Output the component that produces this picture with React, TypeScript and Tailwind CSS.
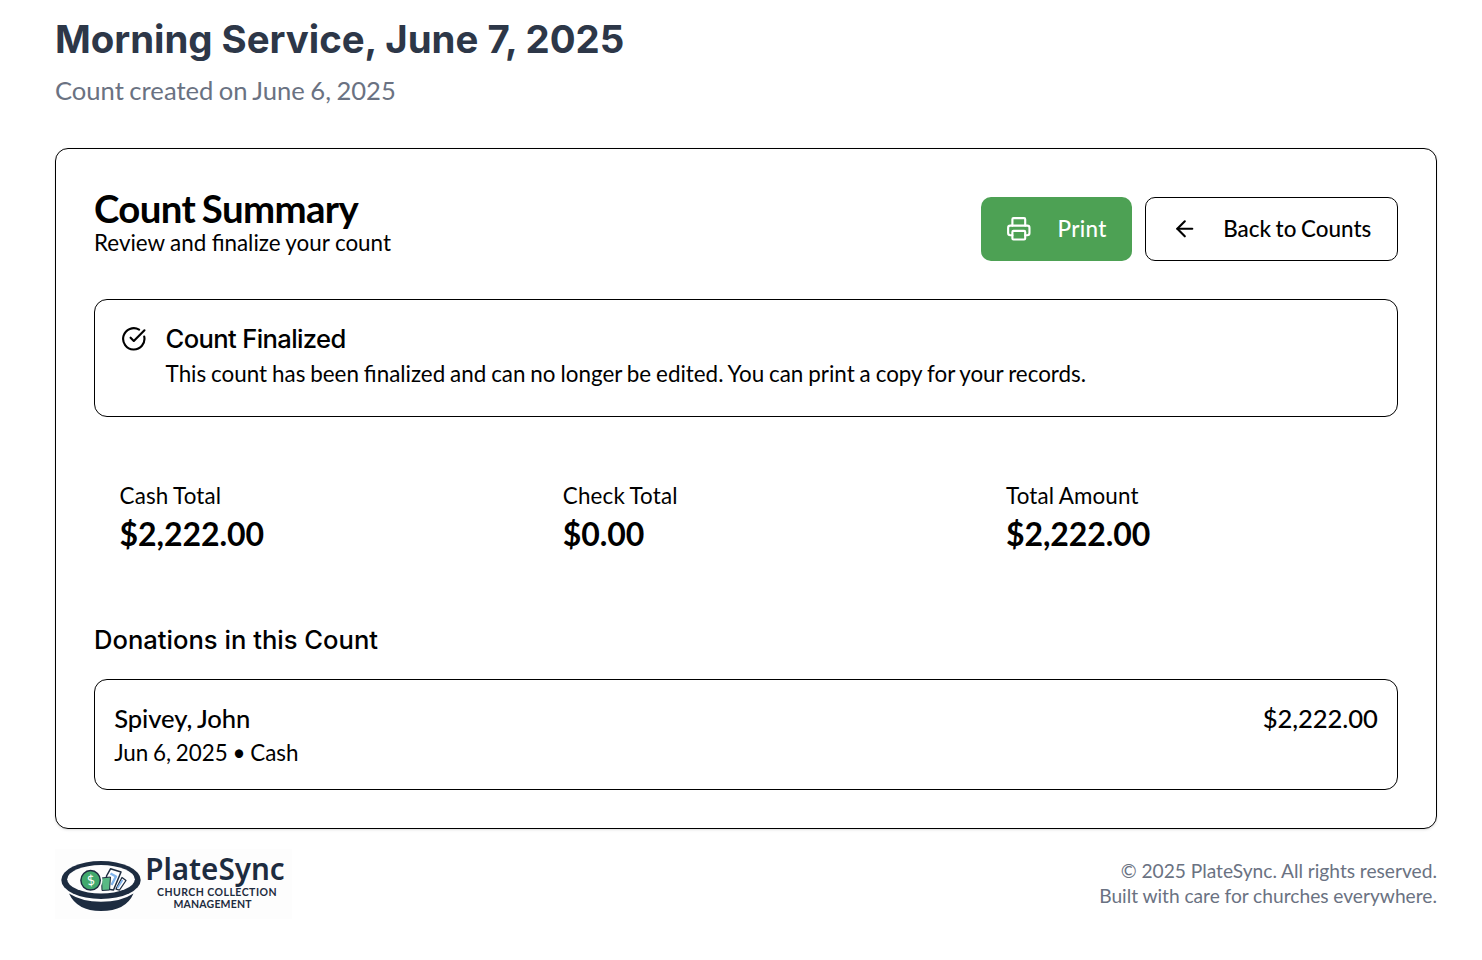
import React from "react";
import { ArrowLeft, Printer, CircleCheckBig } from "lucide-react";

const totals = [
  { label: "Cash Total", value: "$2,222.00" },
  { label: "Check Total", value: "$0.00" },
  { label: "Total Amount", value: "$2,222.00" },
];

function Logo() {
  return (
    <svg width="237" height="70" viewBox="55 849 237 70" role="img" aria-label="PlateSync" className="overflow-visible">
      <rect x="55" y="849" width="237" height="70" fill="#fdfdfd" />
      <path d="M69 893.5 Q77 911 101 911 Q126 911 133.5 893.5 Q121 901.8 101 901.8 Q82 901.8 69 893.5Z" fill="#1d2c40" />
      <ellipse cx="101" cy="880" rx="39.7" ry="19" fill="#1d2c40" />
      <ellipse cx="101" cy="879.3" rx="33.8" ry="14.2" fill="#fdfdfd" />
      <g strokeLinejoin="round">
        <path d="M116 889 L122 877.5 L126 880.5 L119.5 890Z" fill="#fff" stroke="#1d2c40" strokeWidth="1.3" />
        <path d="M117.5 888 L122.5 880" stroke="#82b4eb" strokeWidth="1.8" />
        <path d="M106.5 876 L110.5 868.8 L121 872 L113.5 890 L107 889Z" fill="#fff" stroke="#1d2c40" strokeWidth="1.5" />
        <path d="M110.5 873.5 L116 876.5 L111.5 885" fill="none" stroke="#82b4eb" strokeWidth="2.4" />
        <path d="M101.5 878 L110.5 877 L109.5 890 L102 890.5Z" fill="#58b984" stroke="#1d2c40" strokeWidth="1" />
      </g>
      <circle cx="91" cy="880.3" r="11.4" fill="#fdfdfd" />
      <circle cx="90.6" cy="880.3" r="9.7" fill="#41a96d" stroke="#1d2c40" strokeWidth="1.5" />
      <text x="91" y="885" textAnchor="middle" fill="#fff" fontSize="13" className="font-['Lato',sans-serif]" transform="rotate(-8 91 881)">$</text>
      <text x="145.2" y="879.6" fill="#1d2c40" fontSize="30" fontWeight="650" textLength="139.5" lengthAdjust="spacingAndGlyphs" className="font-['Noto_Sans',sans-serif]">PlateSync</text>
      <text x="157" y="895.8" fill="#1d2c40" fontSize="10.5" fontWeight="700" textLength="119.5" className="font-['Lato',sans-serif]">CHURCH COLLECTION</text>
      <text x="173.5" y="907.8" fill="#1d2c40" fontSize="10.5" fontWeight="700" textLength="78" className="font-['Lato',sans-serif]">MANAGEMENT</text>
    </svg>
  );
}

export default function App() {
  return (
    <div className="flex h-[960px] w-[1482px] flex-col bg-white pl-[55px] pr-[45px] pt-[14px] font-['Lato',sans-serif] text-black">
      <header className="h-[134px]">
        <h1 className="font-['Inter',sans-serif] text-[38.4px] font-bold leading-[51px] tracking-[-0.02px] text-[#2d3748]">Morning Service, June 7, 2025</h1>
        <p className="mt-1.5 text-[25.6px] leading-[38.4px] text-gray-500 [word-spacing:-1.1px]">Count created on June 6, 2025</p>
      </header>

      <main className="h-[681px] rounded-[13px] border border-black px-[38px] pt-[38px] shadow-sm">
        <div className="flex h-[112px] items-start justify-between">
          <div className="pt-0.5">
            <h2 className="text-[38.4px] font-bold leading-[38px] tracking-[-0.64px] [word-spacing:-2px]">Count Summary</h2>
            <p className="text-[22.4px] leading-8 [word-spacing:-0.3px]">Review and finalize your count</p>
          </div>
          <div className="mt-2.5 flex gap-[13px]">
            <button className="flex h-16 w-[151px] items-center rounded-[10px] bg-[#4da154] pl-[25px] text-[22.4px] font-medium tracking-[0.3px] text-white">
              <Printer size={25.6} strokeWidth={2} className="shrink-0" />
              <span className="ml-[26px]">Print</span>
            </button>
            <button className="flex h-16 w-[253px] items-center rounded-[10px] border border-black pl-[25.6px] text-[22.4px] font-medium [word-spacing:-1px]">
              <ArrowLeft size={25.6} strokeWidth={2} className="shrink-0" />
              <span className="ml-[26px] whitespace-nowrap">Back to Counts</span>
            </button>
          </div>
        </div>

        <section className="flex h-[118px] gap-[19px] rounded-[13px] border border-black pl-[26px] pt-[26px]">
          <CircleCheckBig size={25.6} strokeWidth={2} className="shrink-0" />
          <div>
            <h3 className="font-['Inter',sans-serif] text-[25.6px] font-medium leading-[26px] tracking-[-0.64px]">Count Finalized</h3>
            <p className="mt-1 text-[22.4px] leading-[36px] [word-spacing:-0.83px]">This count has been finalized and can no longer be edited. You can print a copy for your records.</p>
          </div>
        </section>

        <section className="mt-[37px] grid h-[128px] grid-cols-3 gap-[25.6px]">
          {totals.map((t) => (
            <div key={t.label} className="p-[25.6px]">
              <p className="text-[22.4px] leading-8 tracking-[0.16px] [word-spacing:-0.7px]">{t.label}</p>
              <p className="text-[32px] font-bold leading-[43px] tracking-[-0.08px]">{t.value}</p>
            </div>
          ))}
        </section>

        <h3 className="mt-[38px] font-['Inter',sans-serif] text-[25.6px] font-medium leading-[39px]">Donations in this Count</h3>
        <div className="mt-5 flex h-[111px] justify-between rounded-[13px] border border-black px-[19.2px] pt-[19px]">
          <div>
            <p className="text-[25.6px] font-medium leading-[38px] tracking-[-0.08px] [word-spacing:-0.9px]">Spivey, John</p>
            <p className="text-[22.4px] leading-8 [word-spacing:-1px]">Jun 6, 2025 • Cash</p>
          </div>
          <p className="text-[25.6px] font-medium leading-[38px] tracking-[-0.08px]">$2,222.00</p>
        </div>
      </main>

      <footer className="flex items-start justify-between pt-5">
        <Logo />
        <div className="pt-[9px] text-right text-[19.2px] leading-[25px] text-gray-500 [word-spacing:-0.2px]">
          <p>© 2025 PlateSync. All rights reserved.</p>
          <p>Built with care for churches everywhere.</p>
        </div>
      </footer>
    </div>
  );
}
